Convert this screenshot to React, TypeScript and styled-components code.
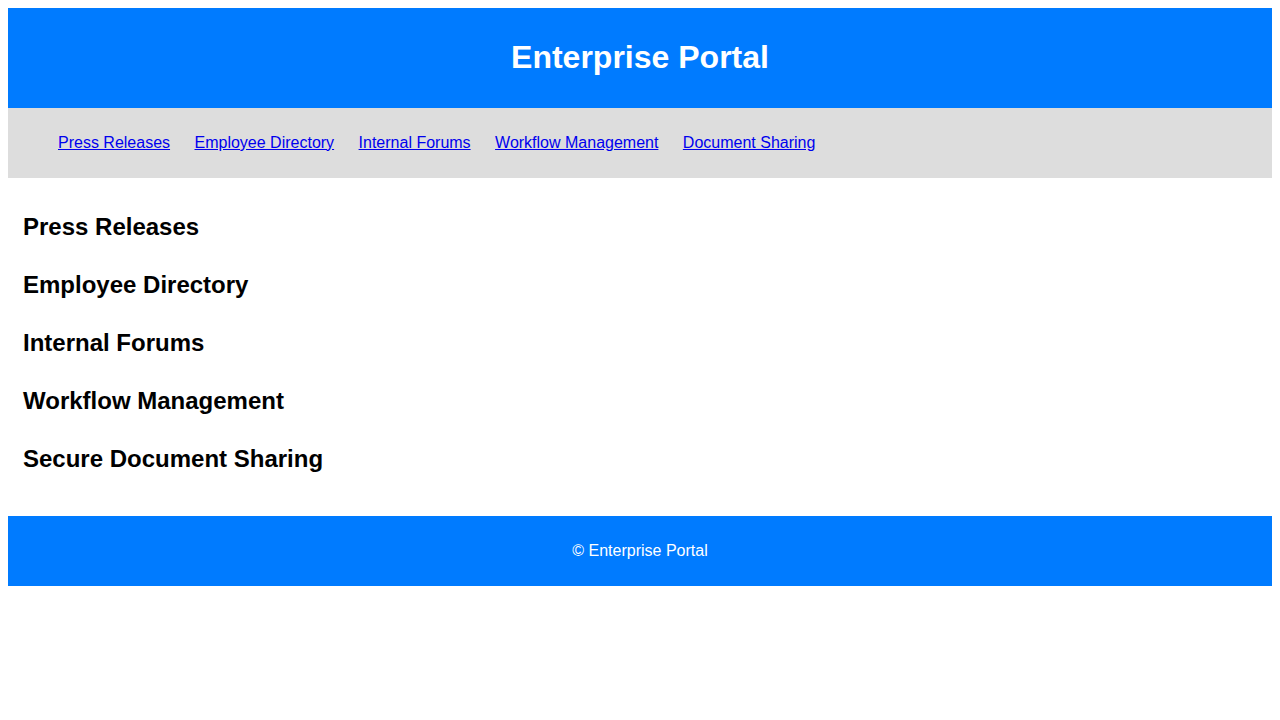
import React from "react";
import styled, { createGlobalStyle } from "styled-components";

const GlobalStyle = createGlobalStyle`
  body {
    margin: 8px;
    font-family: "Liberation Sans", Arial, sans-serif;
    background: #fff;
    color: #000;
  }
`;

const Header = styled.header`
  background-color: #007bff;
  color: #fff;
  padding: 10px;
  text-align: center;
`;

const Title = styled.h1`
  font-size: 32px;
  font-weight: bold;
  margin: 21.44px 0;
`;

const Nav = styled.nav`
  background-color: #ddd;
  padding: 10px;
`;

const NavList = styled.ul`
  list-style: none;
  margin: 16px 0;
  padding-left: 40px;
  font-size: 16px;
`;

const NavItem = styled.li`
  display: inline;
  margin-right: 20px;
`;

const NavLink = styled.a`
  color: #0000ee;
  text-decoration: underline;
`;

const Main = styled.main`
  padding: 15px 15px 13px;
`;

const Section = styled.section`
  margin-bottom: 30px;
`;

const SectionTitle = styled.h2`
  font-size: 24px;
  font-weight: bold;
  margin: 19.92px 0;
`;

const Footer = styled.footer`
  background-color: #007bff;
  color: #fff;
  padding: 10px;
  text-align: center;
`;

const FooterText = styled.p`
  margin: 16px 0;
  font-size: 16px;
`;

const links = [
  { href: "#press", label: "Press Releases" },
  { href: "#directory", label: "Employee Directory" },
  { href: "#forums", label: "Internal Forums" },
  { href: "#workflow", label: "Workflow Management" },
  { href: "#documents", label: "Document Sharing" },
];

const sections = [
  { id: "press", title: "Press Releases" },
  { id: "directory", title: "Employee Directory" },
  { id: "forums", title: "Internal Forums" },
  { id: "workflow", title: "Workflow Management" },
  { id: "documents", title: "Secure Document Sharing" },
];

export default function App() {
  return (
    <>
      <GlobalStyle />
      <Header>
        <Title>Enterprise Portal</Title>
      </Header>
      <Nav>
        <NavList>
          {links.map((l) => (
            <React.Fragment key={l.href}>
              <NavItem>
                <NavLink href={l.href}>{l.label}</NavLink>
              </NavItem>{" "}
            </React.Fragment>
          ))}
        </NavList>
      </Nav>
      <Main>
        {sections.map((s) => (
          <Section key={s.id} id={s.id}>
            <SectionTitle>{s.title}</SectionTitle>
          </Section>
        ))}
      </Main>
      <Footer>
        <FooterText>© Enterprise Portal</FooterText>
      </Footer>
    </>
  );
}
